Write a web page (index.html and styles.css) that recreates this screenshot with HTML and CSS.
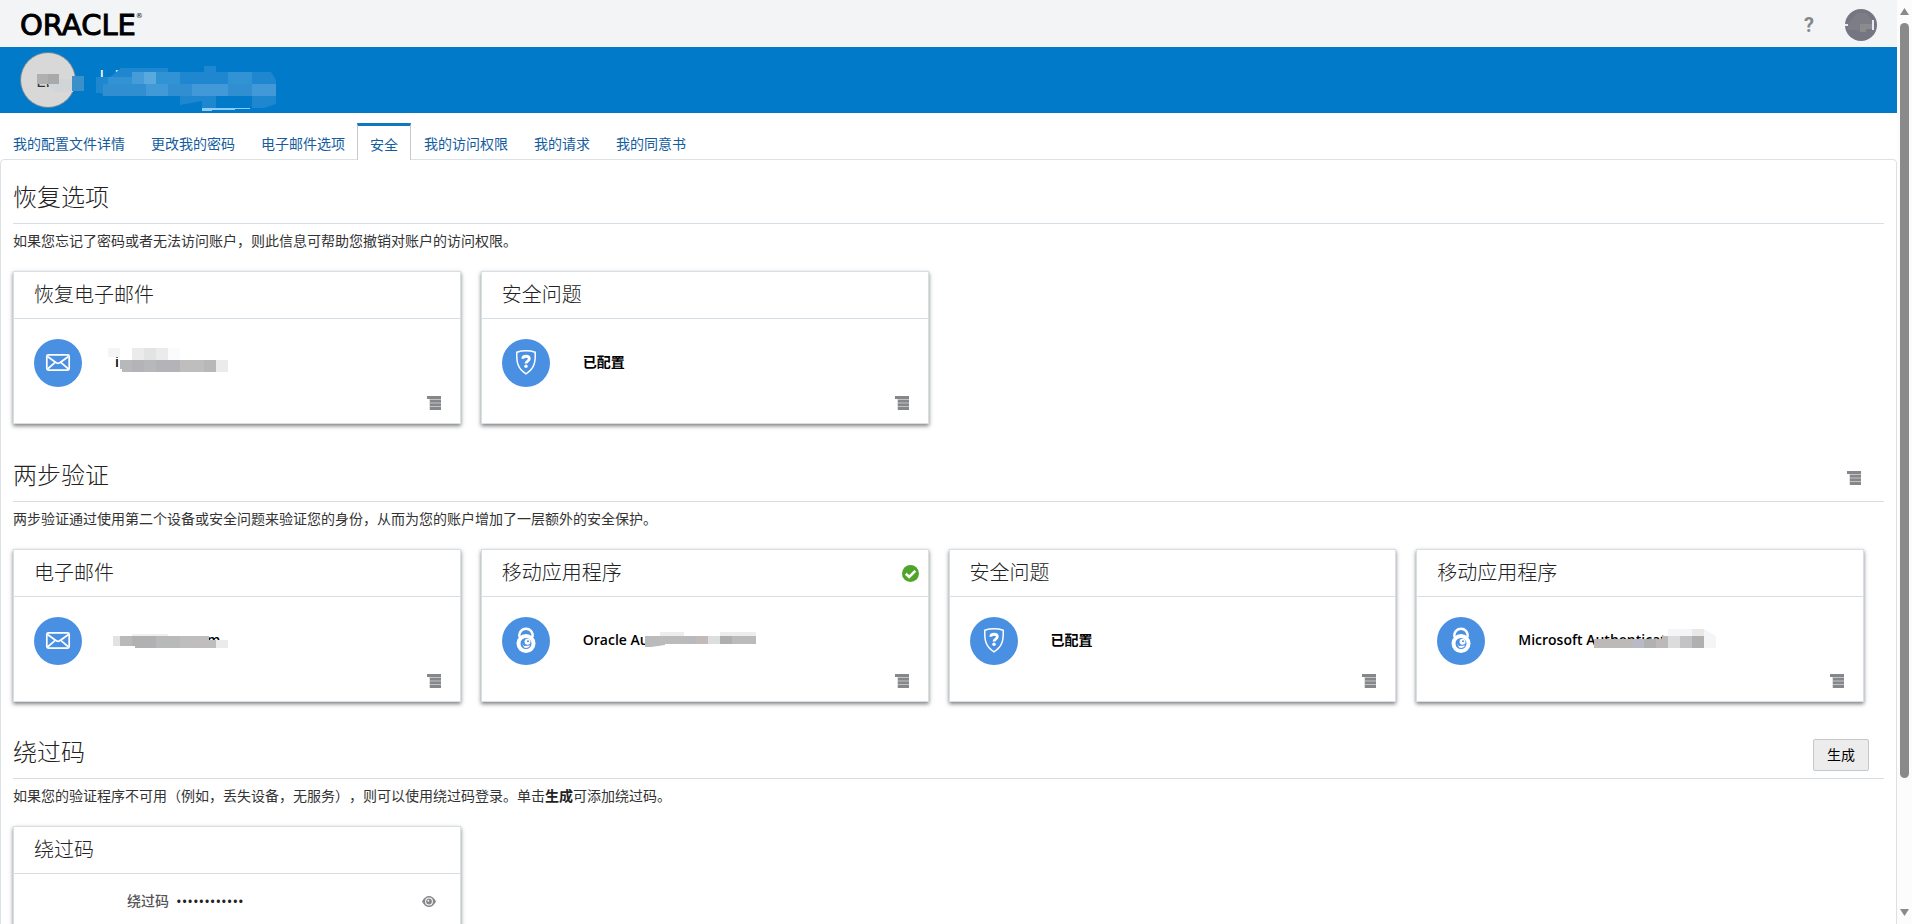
FILE: index.html
```html
<!DOCTYPE html>
<html lang="zh-CN">
<head>
<meta charset="utf-8">
<title>我的配置文件</title>
<link rel="stylesheet" href="styles.css">
</head>
<body>
<svg class="defs" aria-hidden="true">
  <symbol id="i-mail" viewBox="0 0 48 48">
    <rect x="12.8" y="15.8" width="22.4" height="15.4" rx="1.6" fill="none" stroke="#fff" stroke-width="1.7"/>
    <path d="M13.5 17.5L21.5 23.2Q24 25.6 26.500 23.2L34.500 17.500M13.500 30L21.500 23.200M34.500 30L26.500 23.200" fill="none" stroke="#fff" stroke-width="1.7"/>
  </symbol>
  <symbol id="i-shield" viewBox="0 0 48 48">
    <path d="M24 11.800C21 11.800 17.500 12.300 14.800 13.200C14.500 22 15 29.500 24 34.800C33 29.500 33.500 22 33.200 13.200C30.500 12.300 27 11.800 24 11.800Z" fill="none" stroke="#fff" stroke-width="1.500"/>
    <path d="M20.800 19.800C20.800 16.400 27.300 16.400 27.300 19.800C27.300 22.200 24 22 24 24.600" fill="none" stroke="#fff" stroke-width="2.800"/>
    <circle cx="24" cy="27.200" r="1.700" fill="#fff"/>
  </symbol>
  <symbol id="i-lock" viewBox="0 0 48 48">
    <path d="M17.400 20C16 9 32 9 30.600 20" fill="none" stroke="#fff" stroke-width="2.400"/>
    <circle cx="24" cy="26.500" r="7.500" fill="none" stroke="#fff" stroke-width="4"/>
    <circle cx="25.500" cy="24.800" r="3" fill="#fff"/>
    <circle cx="26" cy="24.300" r="1" fill="#4a90e2"/>
    <path d="M20 26L22 29L28.500 28.500Q26 32 22 30.500Z" fill="#fff"/>
  </symbol>
  <symbol id="i-menu" viewBox="0 0 14 14">
    <path d="M0 0H14V3H0ZM3 4H14V6.500H3ZM3 7.500H14V10H3ZM3 11H14V14H3Z" fill="#85878a"/>
    <path d="M2.500 3H14V14H2.500Z" fill="#85878a" opacity=".5"/>
  </symbol>
</svg>
<div class="app">
  <div class="page">
    <header class="topbar">
      <a class="logo" href="#">ORACLE<sup>®</sup></a>
      <button class="help" aria-label="帮助">?</button>
      <button class="account" aria-label="账户">
        <svg viewBox="0 0 32 32" width="32" height="32"><circle cx="16" cy="16" r="16" fill="#747682"/><path d="M2 16L12 4H21L29 14V20H21V23H15V21H3Z" fill="#7d7d87"/><path d="M15 15H27V20H21V23H15Z" fill="#8b8b8e"/><path d="M0 15h3v2H0zM27 11h2v10h-2z" fill="#e8e8ee"/></svg>
      </button>
    </header>
    <div class="banner">
      <div class="avatar">Li
        <svg class="mask avatar-mask" width="50" height="18" viewBox="0 0 50 18"><path d="M2 0h22v10H2z" fill="#b0b0b0"/><path d="M13 0h11v10H13z" fill="#a8a9ab"/><path d="M13 10h11V5h14v13H20z" fill="#d2d5d7"/><path d="M37 2h12v15H37z" fill="#3b8fcb"/></svg>
      </div>
      <div class="name">Li
        <svg class="mask name-mask" width="182" height="46" viewBox="0 0 182 46">
          <path d="M0 11H14L25 2H72V6H108V0H120V6H175L180 14V38L168 42H156V30H120V42H106V35L84 39V29H7L5 27H0Z" fill="#1e87d0"/>
          <path d="M12 11H36V18H12zM60 6H84V18H60zM132 6H156V18H132z" fill="#3293d4"/>
          <path d="M36 6H60V18H36z" fill="#469cd8"/>
          <path d="M48 6H60V18H48z" fill="#59a9df"/>
          <path d="M50 18H72V30H50zM96 18H132V30H96zM156 18H180V30H156z" fill="#419ad7"/>
          <path d="M7 18H50V30H7zM72 18H96V30H72zM132 18H156V30H132z" fill="#318fd1"/>
          <path d="M106 42H154V43H139V44H116V45H106z" fill="#8fccf4"/>
        </svg>
      </div>
    </div>
    <nav class="tabs">
      <a href="#">我的配置文件详情</a>
      <a href="#">更改我的密码</a>
      <a href="#">电子邮件选项</a>
      <a href="#" class="active" aria-current="page">安全</a>
      <a href="#">我的访问权限</a>
      <a href="#">我的请求</a>
      <a href="#">我的同意书</a>
    </nav>
    <main class="panel">
      <section>
        <div class="section-head"><h2>恢复选项</h2></div>
        <p>如果您忘记了密码或者无法访问账户，则此信息可帮助您撤销对账户的访问权限。</p>
        <div class="cards">
          <article class="card">
            <h3>恢复电子邮件</h3>
            <div class="card-body">
              <svg class="badge"><use href="#i-mail"/></svg>
              <div class="value">i
                <svg class="mask value-mask" width="124" height="26" viewBox="0 0 124 26"><path d="M0 0h12v9H0z" fill="#f5f5f5"/><path d="M24 0h36v12H24z" fill="#ebebeb"/><path d="M36 0h12v12H36z" fill="#e3e3e3"/><path d="M60 0h12v12H60z" fill="#fafbfd"/><path d="M12 12h96v12H14v-3h-2z" fill="#b7b8b9"/><path d="M24 12h12v12H24zM48 12h24v12H48z" fill="#b4b3b8"/><path d="M72 12h24v12H72z" fill="#c0bebd"/><path d="M108 12h12v12h-12z" fill="#ebebeb"/></svg>
              </div>
              <button class="menu" aria-label="操作菜单"><svg><use href="#i-menu"/></svg></button>
            </div>
          </article>
          <article class="card">
            <h3>安全问题</h3>
            <div class="card-body">
              <svg class="badge"><use href="#i-shield"/></svg>
              <div class="value">已配置</div>
              <button class="menu" aria-label="操作菜单"><svg><use href="#i-menu"/></svg></button>
            </div>
          </article>
        </div>
      </section>
      <section>
        <div class="section-head"><h2>两步验证</h2><button class="menu" aria-label="操作菜单"><svg><use href="#i-menu"/></svg></button></div>
        <p>两步验证通过使用第二个设备或安全问题来验证您的身份，从而为您的账户增加了一层额外的安全保护。</p>
        <div class="cards">
          <article class="card">
            <h3>电子邮件</h3>
            <div class="card-body">
              <svg class="badge"><use href="#i-mail"/></svg>
              <div class="value far">m
                <svg class="mask far-mask" width="116" height="14" viewBox="0 0 116 14"><path d="M19 0h36v2H19z" fill="#f0f0f0"/><path d="M0 2h7v10H0z" fill="#e3e2de"/><path d="M7 2h89v4h7v8H22v-2H7z" fill="#b8bab9"/><path d="M19 2h24v12H22v-2h-3z" fill="#b2b0b2"/><path d="M67 2h29v4h7v8H67z" fill="#bfbdbd"/><path d="M103 6h12v8h-12z" fill="#ebebeb"/></svg>
              </div>
              <button class="menu" aria-label="操作菜单"><svg><use href="#i-menu"/></svg></button>
            </div>
          </article>
          <article class="card">
            <h3>移动应用程序
              <svg class="check" viewBox="0 0 17 17"><circle cx="8.500" cy="8.500" r="8.500" fill="#4fa52a"/><path d="M3.800 8.800L7.200 12L13.300 5.800" fill="none" stroke="#fff" stroke-width="2.600"/></svg>
            </h3>
            <div class="card-body">
              <svg class="badge"><use href="#i-lock"/></svg>
              <div class="value">Oracle Au
                <svg class="mask oracle-mask" width="112" height="16" viewBox="0 0 112 16"><path d="M15 0h24v4H15zM75 0h36v4H75z" fill="#ededed"/><path d="M0 4h111v8H20v1L6 15H0z" fill="#bcbbbb"/><path d="M39 4h12v8H39z" fill="#b9b9c0"/><path d="M51 4h12v8H51z" fill="#c1bab8"/><path d="M63 4h12v8H63z" fill="#dbe0df"/><path d="M75 4h12v8H75z" fill="#afafb2"/></svg>
              </div>
              <button class="menu" aria-label="操作菜单"><svg><use href="#i-menu"/></svg></button>
            </div>
          </article>
          <article class="card">
            <h3>安全问题</h3>
            <div class="card-body">
              <svg class="badge"><use href="#i-shield"/></svg>
              <div class="value">已配置</div>
              <button class="menu" aria-label="操作菜单"><svg><use href="#i-menu"/></svg></button>
            </div>
          </article>
          <article class="card">
            <h3>移动应用程序</h3>
            <div class="card-body">
              <svg class="badge"><use href="#i-lock"/></svg>
              <div class="value">Microsoft Authenticato
                <svg class="mask ms-mask" width="122" height="20" viewBox="0 0 122 20"><path d="M74 0h36l12 7v12H74z" fill="#f4f5f6"/><path d="M98 0h12v7H98z" fill="#e9e8e7"/><path d="M0 10h68V7h6v12H0z" fill="#bcb9b8"/><path d="M38 10h12v9H38z" fill="#b9bac5"/><path d="M50 10h12v9H50z" fill="#b1b1b2"/><path d="M74 7h12v12H74z" fill="#dcdcde"/><path d="M86 7h24v12H86z" fill="#c3c3c5"/><path d="M98 7h12v12H98z" fill="#b0b0b0"/></svg>
              </div>
              <button class="menu" aria-label="操作菜单"><svg><use href="#i-menu"/></svg></button>
            </div>
          </article>
        </div>
      </section>
      <section>
        <div class="section-head"><h2>绕过码</h2><button class="generate">生成</button></div>
        <p>如果您的验证程序不可用（例如，丢失设备，无服务），则可以使用绕过码登录。单击<b>生成</b>可添加绕过码。</p>
        <div class="cards">
          <article class="card">
            <h3>绕过码</h3>
            <div class="code-row">
              <label for="code">绕过码</label>
              <input id="code" type="password" value="000000000000" readonly>
              <button class="eye" aria-label="显示绕过码"><svg viewBox="0 0 14 11"><path d="M0 5.500Q3 0 7 0T14 5.500Q11 11 7 11T0 5.500Z" fill="#85878a"/><circle cx="7" cy="5.500" r="3.900" fill="#fff"/><circle cx="7" cy="5.500" r="2.900" fill="#85878a"/><circle cx="6.300" cy="4.700" r=".9" fill="#fff"/></svg></button>
            </div>
          </article>
        </div>
      </section>
    </main>
  </div>
  <div class="scrollbar" aria-hidden="true">
    <svg viewBox="0 0 9 7"><path d="M4.500 0L9 7H0Z" fill="#8a8a8a"/></svg>
    <div class="track"><div class="thumb"></div></div>
    <svg viewBox="0 0 9 7"><path d="M4.500 7L9 0H0Z" fill="#8a8a8a"/></svg>
  </div>
</div>
</body>
</html>
```
FILE: styles.css
```css
* { box-sizing: border-box; }
body {
  margin: 0;
  overflow: hidden;
  background: #fff;
  color: #333;
  font: 14px/20px "Open Sans", "Noto Sans CJK SC", sans-serif;
  text-spacing-trim: space-all;
}
button { padding: 0; border: 0; background: none; font: inherit; cursor: pointer; }
a { text-decoration: none; }
h2, h3, p { margin: 0; }
.defs { display: none; }
.app { display: flex; height: 100vh; }
.page { flex: 1; min-width: 0; overflow: hidden; }

.topbar {
  display: flex;
  align-items: center;
  height: 47px;
  padding: 3px 20px 0;
  background: #f3f4f6;
}
.logo {
  display: flex;
  margin-right: auto;
  color: #000;
  font: 29px/34px "DejaVu Sans", sans-serif;
  -webkit-text-stroke: 1px #000;
}
.logo sup { font-size: 7px; line-height: 16px; -webkit-text-stroke: 0; }
.help { margin-right: 31px; color: #85878a; font: bold 20px/24px Roboto, sans-serif; }
.account { height: 32px; }
.account svg { display: block; }

.banner {
  display: flex;
  align-items: center;
  gap: 22px;
  height: 66px;
  padding: 0 20px;
  background: #007ac9;
  color: #fff;
}
.avatar {
  position: relative;
  width: 56px;
  height: 56px;
  padding-left: 15px;
  border: 1px solid #6f7f8c;
  border-radius: 50%;
  background: #d8d8d8;
  color: #333;
  font-size: 18px;
  line-height: 54px;
}
.name { position: relative; font-size: 30px; line-height: 40px; font-weight: 300; }
.mask { position: absolute; }
.avatar-mask { left: 14px; top: 21px; }
.name-mask { left: -2px; top: 6px; }

.tabs {
  display: flex;
  align-items: flex-end;
  height: 46px;
  position: relative;
}
.tabs a {
  height: 36px;
  padding: 4px 13px 0;
  color: #145c9e;
  line-height: 34px;
}
.tabs .active {
  height: 37px;
  margin: 0 0 -1px -1px;
  padding: 2px 12px 0;
  border: 1px solid #c4cace;
  border-top: 3px solid #1278bd;
  border-bottom: 0;
  background: #fff;
}

.panel {
  padding: 0 12px;
  border: 1px solid #dce1e4;
  border-radius: 4px 4px 0 0;
}
.section-head {
  display: flex;
  align-items: center;
  height: 64px;
  padding-top: 10px;
  border-bottom: 1px solid #d6dfe6;
}
section:last-child .section-head { height: 63px; }
h2 { margin-right: auto; color: #222; font-size: 24px; line-height: 36px; font-weight: 300; }
.section-head .menu { margin: 6px 23px 0 0; }
.generate {
  width: 56px;
  height: 32px;
  margin: 6px 15px 0 0;
  border: 1px solid #c4c8cb;
  border-radius: 2px;
  background: #ececec;
  color: #000;
}
section p { height: 47px; line-height: 34px; }
section p b { color: #222; }

.cards {
  display: grid;
  grid-template-columns: repeat(4, 1fr);
  gap: 20px;
  margin: 0 20px 14px 0;
}
.card {
  height: 153px;
  border: 1px solid #d6dfe6;
  background: #fff;
  box-shadow: 0 2px 4px rgba(0, 0, 0, .5);
}
h3 {
  display: flex;
  align-items: center;
  justify-content: space-between;
  height: 47px;
  padding: 0 9px 0 20px;
  border-bottom: 1px solid #d6dfe6;
  color: #222;
  font-size: 20px;
  line-height: 30px;
  font-weight: 300;
}
.check { width: 17px; height: 17px; }
.card-body {
  display: flex;
  align-items: flex-start;
  height: 104px;
  padding: 20px 19px 13px 20px;
}
.badge { width: 48px; height: 48px; border-radius: 50%; background: #4a90e2; }
.value {
  position: relative;
  margin: 0 auto 0 33px;
  color: #000;
  font-weight: 600;
  line-height: 46px;
  white-space: nowrap;
}
.value.far { padding-left: 92px; }
.value-mask { left: -7px; top: 9px; }
.far-mask { left: -2px; top: 17px; }
.oracle-mask { left: 62px; top: 15px; }
.ms-mask { left: 76px; top: 12px; }
.menu { height: 14px; }
.menu svg { display: block; width: 14px; height: 14px; }
.card-body .menu { align-self: flex-end; }

.code-row {
  display: flex;
  align-items: center;
  height: 54px;
  padding: 0 24px 0 113px;
}
.code-row label { color: #555; font-weight: 500; }
.code-row input {
  flex: 1;
  min-width: 0;
  margin-left: 7px;
  padding: 0;
  border: 0;
  outline: 0;
  background: none;
  color: #222;
  font: 15px/20px "Open Sans", sans-serif;
}
.eye { height: 11px; }
.eye svg { display: block; width: 14px; height: 11px; }

.scrollbar {
  display: flex;
  flex-direction: column;
  align-items: center;
  width: 15px;
  padding: 8px 0;
  background: #fcfcfc;
}
.scrollbar svg { width: 9px; height: 7px; }
.track { flex: 1; padding: 8px 0; }
.thumb { width: 9px; height: 86%; border-radius: 5px; background: #8a8a8a; }
```
